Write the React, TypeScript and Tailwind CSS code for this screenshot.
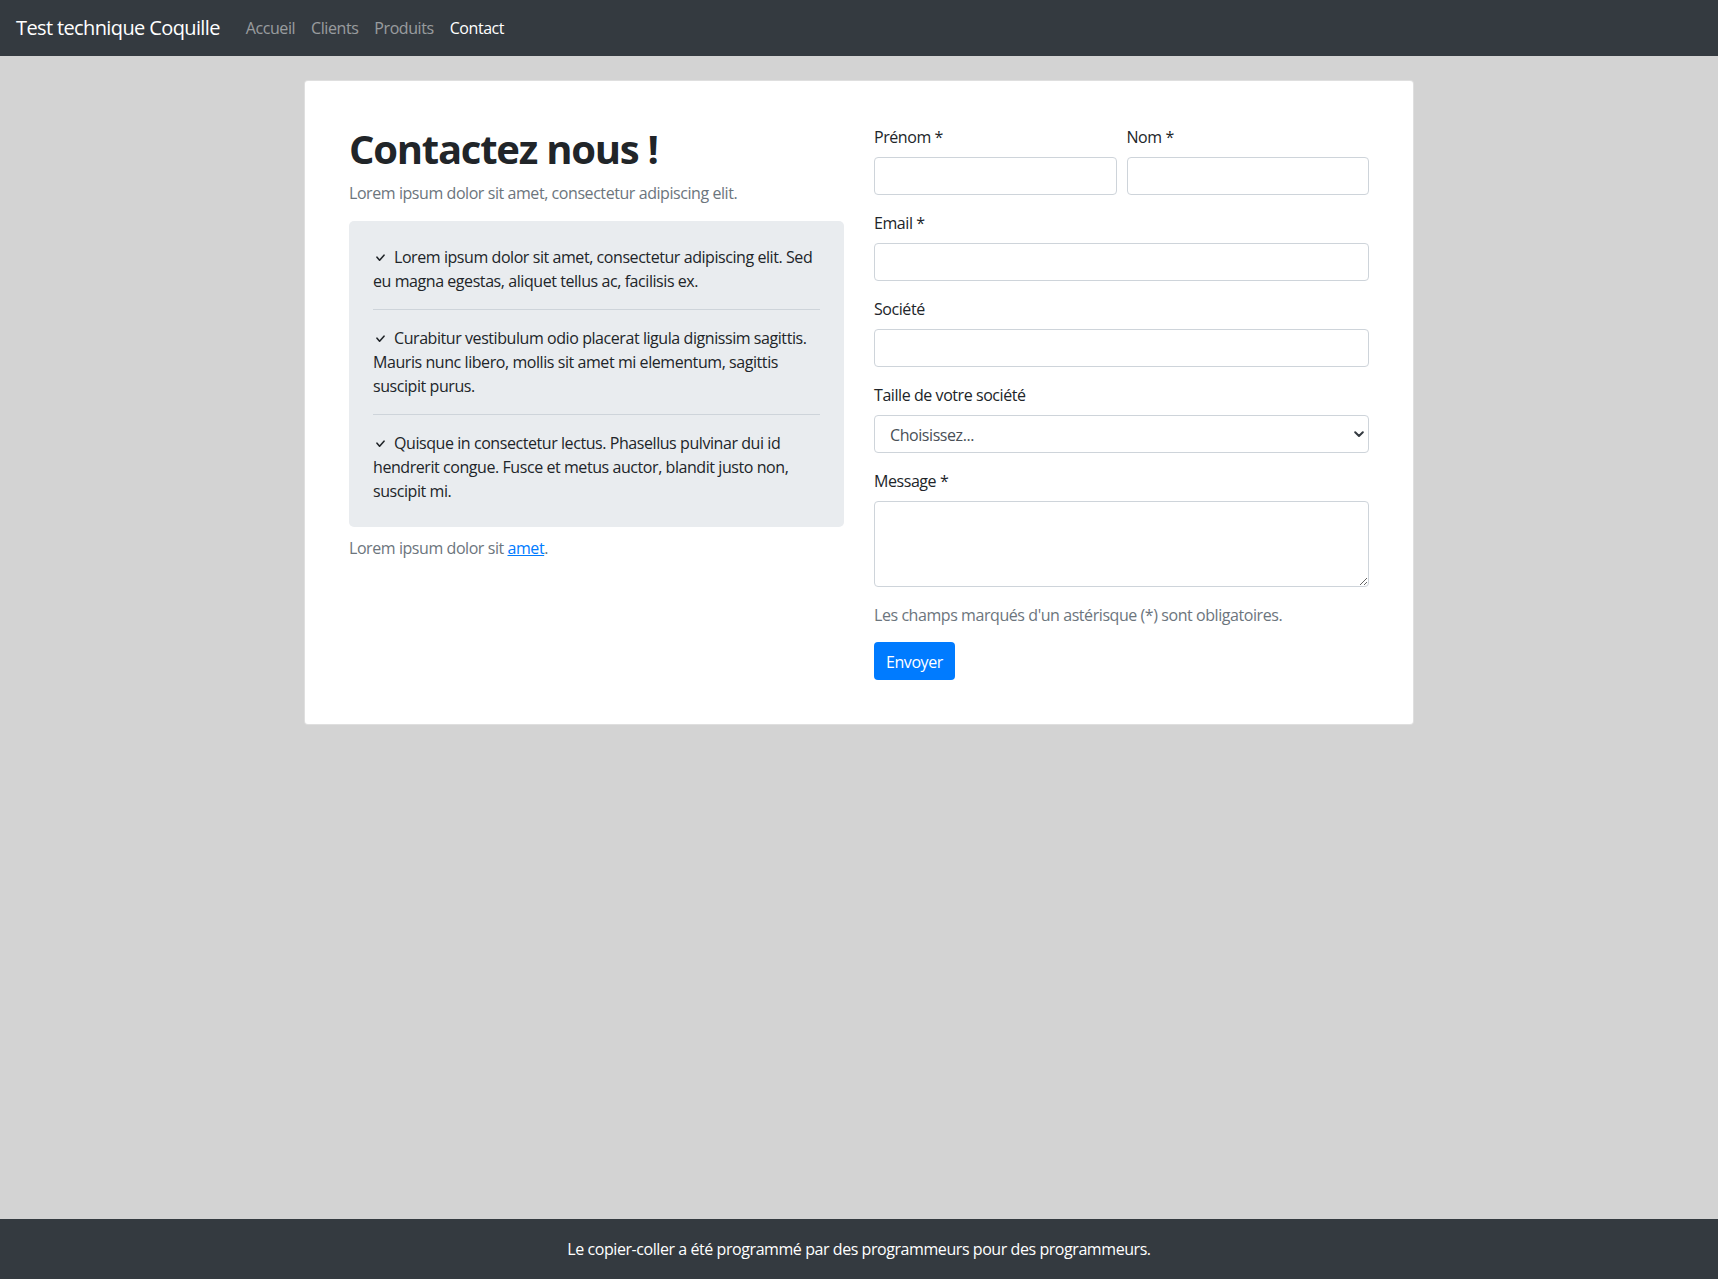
import React from "react";

function Check() {
  return (
    <svg width="9" height="8" viewBox="0 0 9 8" className="inline-block align-[1px] ml-[3px] mr-[9px]" fill="none">
      <polyline points="1,3.2 3.6,6.2 8,1.2" stroke="#212529" strokeWidth="1.6" strokeLinecap="round" strokeLinejoin="round" />
    </svg>
  );
}

const items = [
  "Lorem ipsum dolor sit amet, consectetur adipiscing elit. Sed eu magna egestas, aliquet tellus ac, facilisis ex.",
  "Curabitur vestibulum odio placerat ligula dignissim sagittis. Mauris nunc libero, mollis sit amet mi elementum, sagittis suscipit purus.",
  "Quisque in consectetur lectus. Phasellus pulvinar dui id hendrerit congue. Fusce et metus auctor, blandit justo non, suscipit mi.",
];

function Label({ children }: { children: React.ReactNode }) {
  return <label className="block mb-2 text-base leading-6 text-[#212529]">{children}</label>;
}

export default function App() {
  return (
    <div className="min-h-screen flex flex-col bg-[#d3d3d3] font-['Open_Sans',sans-serif] tracking-[-0.027em] text-base leading-6 text-[#212529]">
      <nav className="h-14 shrink-0 bg-[#343a40] flex items-center px-4">
        <span className="text-white text-xl leading-[30px] tracking-[-0.031em] mr-[18px]">Test technique Coquille</span>
        <div className="flex">
          <a className="px-2 text-white/50">Accueil</a>
          <a className="px-2 text-white/50">Clients</a>
          <a className="px-2 text-white/50">Produits</a>
          <a className="px-2 text-white">Contact</a>
        </div>
      </nav>

      <main className="flex-1">
        <div className="mx-auto mt-6 w-[1110px] bg-white border border-black/[0.125] rounded p-[44px]">
          <div className="grid grid-cols-2 gap-x-[30px]">
            <div>
              <h1 className="text-[40px] leading-[48px] font-bold tracking-[-0.031em] mb-2 text-[#212529]">Contactez nous !</h1>
              <p className="text-[#6c757d] mb-4">Lorem ipsum dolor sit amet, consectetur adipiscing elit.</p>
              <div className="bg-[#e9ecef] rounded-[5px] px-6 py-2">
                {items.map((t, i) => (
                  <div key={i} className={"py-4" + (i < items.length - 1 ? " border-b border-[#ced4da]" : "")}>
                    <Check />
                    {t}
                  </div>
                ))}
              </div>
              <p className="mt-[9px] text-[#6c757d]">
                Lorem ipsum dolor sit <a className="text-[#007bff] underline">amet</a>.
              </p>
            </div>

            <form>
              <div className="flex gap-[10px] mb-4">
                <div className="flex-1">
                  <Label>Prénom *</Label>
                  <input className="block w-full h-[38px] border border-[#ced4da] rounded px-3" />
                </div>
                <div className="flex-1">
                  <Label>Nom *</Label>
                  <input className="block w-full h-[38px] border border-[#ced4da] rounded px-3" />
                </div>
              </div>
              <div className="mb-4">
                <Label>Email *</Label>
                <input className="block w-full h-[38px] border border-[#ced4da] rounded px-3" />
              </div>
              <div className="mb-4">
                <Label>Société</Label>
                <input className="block w-full h-[38px] border border-[#ced4da] rounded px-3" />
              </div>
              <div className="mb-4">
                <Label>Taille de votre société</Label>
                <div className="relative">
                  <select className="block w-full h-[38px] appearance-none border border-[#ced4da] rounded pl-[15px] pr-6 pt-px text-[#495057] bg-white">
                    <option>Choisissez...</option>
                  </select>
                  <svg width="10" height="7" viewBox="0 0 10 7" className="absolute right-[5px] top-[16px] pointer-events-none" fill="none">
                    <polyline points="1.2,1.3 5,5 8.8,1.3" stroke="#343a40" strokeWidth="2" strokeLinecap="round" strokeLinejoin="round" />
                  </svg>
                </div>
              </div>
              <div className="mb-4">
                <Label>Message *</Label>
                <textarea rows={3} className="block w-full h-[86px] border border-[#ced4da] rounded px-3 py-[6px]" />
              </div>
              <p className="text-[#6c757d] mb-[15px]">Les champs marqués d'un astérisque (*) sont obligatoires.</p>
              <button type="button" className="h-[38px] px-3 pt-px bg-[#007bff] text-white rounded">Envoyer</button>
            </form>
          </div>
        </div>
      </main>

      <footer className="h-[60px] shrink-0 bg-[#343a40] flex items-center justify-center text-white">
        Le copier-coller a été programmé par des programmeurs pour des programmeurs.
      </footer>
    </div>
  );
}
